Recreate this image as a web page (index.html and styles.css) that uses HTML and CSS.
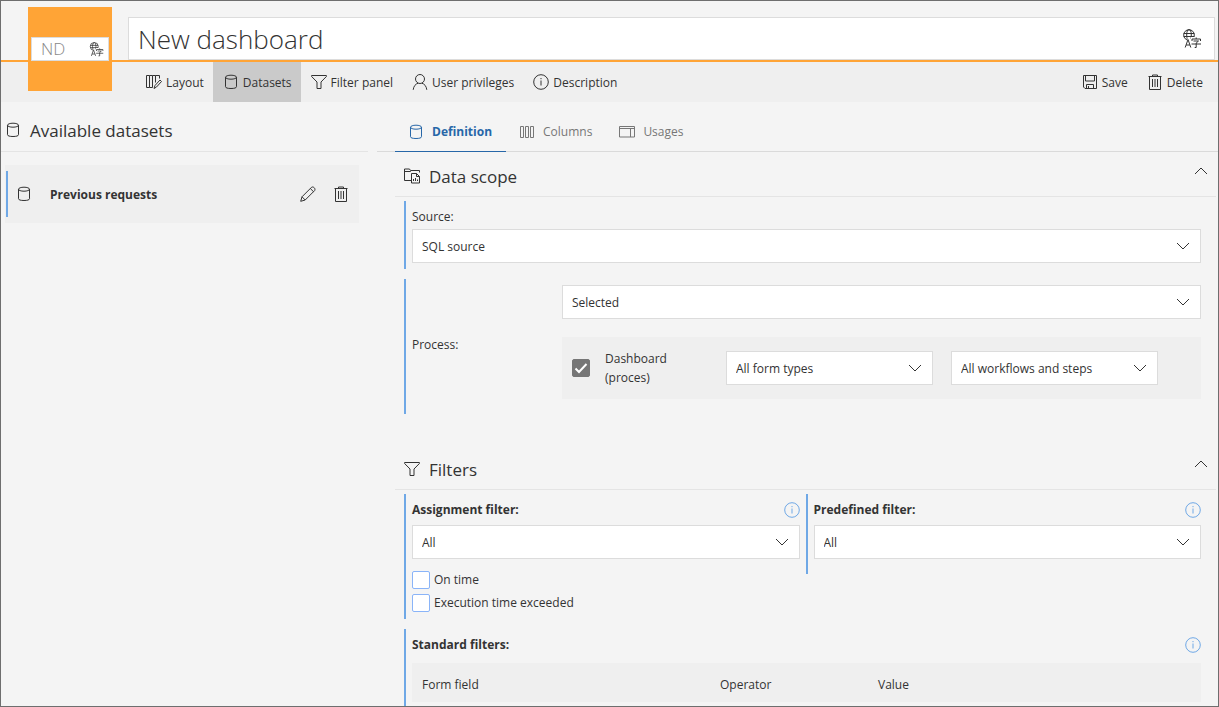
FILE: index.html
```html
<!DOCTYPE html>
<html lang="en">
<head>
<meta charset="utf-8">
<title>New dashboard</title>
<link rel="stylesheet" href="styles.css">
</head>
<body>
<svg class="sprite" aria-hidden="true">
  <symbol id="i-db" viewBox="0 0 16 16"><ellipse cx="8" cy="3.200" rx="5.500" ry="2"/><path d="M2.500 3.200v9.500c0 1.200 2.200 1.800 5.500 1.800s5.500-.6 5.500-1.800v-9.500"/></symbol>
  <symbol id="i-layout" viewBox="0 0 16 16"><path d="M.5 1.500h3v12h-3zM3.500 13.500h3v-12h3v7M6.500 1.500h-3M9.500 1.500h4v3M8 14.500l1-3 5-5.500 1.500 1.500-5 5.500-2.500 1.500z"/></symbol>
  <symbol id="i-filter" viewBox="0 0 16 16"><path d="M.6 1.500h14.800v1l-5.400 5.500v6.500h-4V8L.6 2.500z"/></symbol>
  <symbol id="i-user" viewBox="0 0 16 16"><circle cx="8" cy="5" r="4.500"/><path d="M1.200 15.800c.4-3.600 2.400-6 5-6.600M14.800 15.800c-.4-3.600-2.400-6-5-6.600"/></symbol>
  <symbol id="i-info" viewBox="0 0 16 16"><circle cx="8" cy="8" r="7.300"/><path d="M8 6.500v5M8 4v1.200"/></symbol>
  <symbol id="i-save" viewBox="0 0 16 16"><path d="M1.500 1.500h13v13h-11.500l-1.500-1.500zM3.500 1.500v5.500h9v-5.500M4.500 14.500v-4h7v4M6.500 12v2.500"/></symbol>
  <symbol id="i-trash" viewBox="0 0 16 16"><path d="M1.500 2.500h13M5.500 2.500v-1.500h5v1.500M2.500 2.500v13h11v-13M5.500 5v8M8 5v8M10.500 5v8"/></symbol>
  <symbol id="i-pencil" viewBox="0 0 16 16"><path d="M.7 15.300l1.300-4.500L11.500 1.300c1.800-1.200 4.300 1.200 3.200 3.200L5.200 14zM2 10.800L5.200 14M10.300 2.500l3.200 3.200"/></symbol>
  <symbol id="i-columns" viewBox="0 0 16 16"><path d="M1.500 2.500h3v11h-3zM6.500 2.500h3v11h-3zM11.500 2.500h3v11h-3z"/></symbol>
  <symbol id="i-usages" viewBox="0 0 16 16"><path d="M.5 2.500h15v10.500H.5zM.5 4.500h15M11.500 4.500v8.500"/></symbol>
  <symbol id="i-scope" viewBox="0 0 16 16"><path d="M7 12.500H.5v-11.500h5l1 1.500h9v2M.5 3.500h6l1-1M7.500 5.500h5l3 3v6.500h-8zM12.500 5.500v3h3M9.500 13v-2M11.500 13v-3M13.500 13v-1.500"/></symbol>
  <symbol id="i-down" viewBox="0 0 14 14"><path d="M1 4l6 6 6-6"/></symbol>
  <symbol id="i-up" viewBox="0 0 14 14"><path d="M1 10l6-6 6 6"/></symbol>
  <symbol id="i-lang" viewBox="0 0 20 20"><circle cx="7" cy="6" r="5.300"/><ellipse cx="7" cy="6" rx="2.300" ry="5.300"/><path d="M1.700 4.500h10.600M1.700 7.500h10.600" /><path class="knockout" d="M2 20l3.500-10.500h3.500v-1.500h11v12z"/><path d="M3.200 18.500l2.800-8 2.800 8M4.200 16h3.600M14.200 8.500v1.500M10 12v-2h8.500v2M11.500 12h5l-2.300 2v4.500h-1.500M9.500 15h9.500"/></symbol>
  <symbol id="i-tick" viewBox="0 0 18 18"><path d="M3.500 9.500l3.500 3.500 7.500-8"/></symbol>
</svg>
<div class="app">
  <header class="header">
    <div class="titlebar">
      <div class="title-box">
        <input class="title-input" type="text" value="New dashboard" aria-label="Dashboard name">
        <button class="icon-button" type="button" aria-label="Translate name"><svg class="icon icon-lg"><use href="#i-lang"/></svg></button>
      </div>
    </div>
    <div class="tile">
      <div class="tile-box">
        <input class="tile-input" type="text" value="ND" aria-label="Short name">
        <button class="icon-button" type="button" aria-label="Translate short name"><svg class="icon icon-sm"><use href="#i-lang"/></svg></button>
      </div>
    </div>
    <nav class="toolbar">
      <button class="tool" type="button"><svg class="icon"><use href="#i-layout"/></svg>Layout</button>
      <button class="tool tool-active" type="button"><svg class="icon"><use href="#i-db"/></svg>Datasets</button>
      <button class="tool" type="button"><svg class="icon"><use href="#i-filter"/></svg>Filter panel</button>
      <button class="tool" type="button"><svg class="icon"><use href="#i-user"/></svg>User privileges</button>
      <button class="tool" type="button"><svg class="icon"><use href="#i-info"/></svg>Description</button>
      <span class="spacer"></span>
      <button class="tool" type="button"><svg class="icon"><use href="#i-save"/></svg>Save</button>
      <button class="tool" type="button"><svg class="icon"><use href="#i-trash"/></svg>Delete</button>
    </nav>
  </header>
  <div class="columns">
    <aside class="side">
      <h2 class="side-title"><svg class="icon"><use href="#i-db"/></svg>Available datasets</h2>
      <div class="dataset">
        <div class="dataset-body">
          <svg class="icon"><use href="#i-db"/></svg>
          <span class="dataset-name">Previous requests</span>
          <button class="icon-button" type="button" aria-label="Edit"><svg class="icon"><use href="#i-pencil"/></svg></button>
          <button class="icon-button" type="button" aria-label="Delete dataset"><svg class="icon"><use href="#i-trash"/></svg></button>
        </div>
      </div>
    </aside>
    <main class="main">
      <div class="tabs">
        <button class="tab tab-active" type="button"><svg class="icon"><use href="#i-db"/></svg>Definition</button>
        <button class="tab" type="button"><svg class="icon"><use href="#i-columns"/></svg>Columns</button>
        <button class="tab" type="button"><svg class="icon"><use href="#i-usages"/></svg>Usages</button>
      </div>
      <section class="section">
        <h2 class="section-title"><svg class="icon"><use href="#i-scope"/></svg>Data scope
          <button class="icon-button collapse" type="button" aria-label="Collapse data scope"><svg class="icon chevron"><use href="#i-up"/></svg></button></h2>
        <div class="fields">
          <div class="field">
            <label class="label" for="source">Source:</label>
            <div class="select"><select id="source"><option>SQL source</option></select><svg class="icon chevron"><use href="#i-down"/></svg></div>
          </div>
          <div class="field process">
            <label class="process-label" for="process">Process:</label>
            <div class="process-content">
              <div class="select"><select id="process"><option>Selected</option></select><svg class="icon chevron"><use href="#i-down"/></svg></div>
              <div class="process-row">
                <label class="process-name"><span class="check"><input class="box box-dark" type="checkbox" checked><svg class="tick"><use href="#i-tick"/></svg></span><span>Dashboard<br>(proces)</span></label>
                <div class="select"><select aria-label="Form types"><option>All form types</option></select><svg class="icon chevron"><use href="#i-down"/></svg></div>
                <div class="select"><select aria-label="Workflows"><option>All workflows and steps</option></select><svg class="icon chevron"><use href="#i-down"/></svg></div>
              </div>
            </div>
          </div>
        </div>
      </section>
      <section class="section">
        <h2 class="section-title"><svg class="icon"><use href="#i-filter"/></svg>Filters
          <button class="icon-button collapse" type="button" aria-label="Collapse filters"><svg class="icon chevron"><use href="#i-up"/></svg></button></h2>
        <div class="fields">
          <div class="pair">
            <div class="field">
              <div class="label strong"><label for="assignment">Assignment filter:</label><svg class="icon info"><use href="#i-info"/></svg></div>
              <div class="select"><select id="assignment"><option>All</option></select><svg class="icon chevron"><use href="#i-down"/></svg></div>
              <div class="options">
                <label class="option"><input class="box" type="checkbox">On time</label>
                <label class="option"><input class="box" type="checkbox">Execution time exceeded</label>
              </div>
            </div>
            <div class="field predefined">
              <div class="label strong"><label for="predefined">Predefined filter:</label><svg class="icon info"><use href="#i-info"/></svg></div>
              <div class="select"><select id="predefined"><option>All</option></select><svg class="icon chevron"><use href="#i-down"/></svg></div>
            </div>
          </div>
          <div class="field standard">
            <div class="label strong">Standard filters:<svg class="icon info"><use href="#i-info"/></svg></div>
            <table class="table">
              <thead><tr><th class="col-field">Form field</th><th class="col-operator">Operator</th><th>Value</th></tr></thead>
            </table>
          </div>
        </div>
      </section>
    </main>
  </div>
</div>
</body>
</html>
```
FILE: styles.css
```css
* { box-sizing: border-box; }
body {
  margin: 0;
  color: #333;
  background: #f4f4f4;
  font: 12px/19px "Open Sans", "Noto Sans", sans-serif;
}
button, input, select { font: inherit; color: inherit; }
button { padding: 0; border: 0; background: none; cursor: pointer; }
.sprite { position: absolute; width: 0; height: 0; }
.icon {
  flex: none;
  display: block;
  width: 16px;
  height: 16px;
  fill: none;
  stroke: currentColor;
  stroke-width: 1;
}
.icon-lg { width: 20px; height: 20px; }
.icon-sm { width: 15px; height: 15px; }
.knockout { fill: #fff; stroke: none; }
.chevron { width: 14px; height: 14px; }
.icon-button { flex: none; }
.app {
  display: flex;
  flex-direction: column;
  height: 100vh;
  overflow: hidden;
  border: 1px solid #6e6e6e;
}

/* Header */
.header { display: grid; grid-template-columns: 127px 1fr; flex: none; }
.titlebar {
  grid-area: 1 / 1 / 2 / 3;
  padding: 16px 3px 0 127px;
  border-bottom: 2px solid #ffa436;
}
.title-box, .tile-box {
  display: flex;
  align-items: center;
  background: #fff;
  border: 1px solid #dcdcdc;
}
.title-box { height: 43px; padding: 0 12px 0 9px; }
.title-input, .tile-input {
  flex: 1;
  min-width: 0;
  padding: 0;
  border: 0;
  background: none;
  outline: 0;
  font-weight: 300;
}
.title-input { font-size: 26px; line-height: 36px; }
.tile {
  grid-area: 1 / 1 / 3 / 2;
  align-self: start;
  width: 84px;
  height: 84px;
  margin: 6px 0 0 27px;
  padding: 30px 3px 0;
  background: #ffa436;
  z-index: 1;
}
.tile-box { height: 24px; padding: 0 4px 0 9px; }
.tile-input { font-size: 17px; line-height: 20px; color: #888; }
.toolbar {
  grid-area: 2 / 1 / 3 / 3;
  display: flex;
  height: 40px;
  padding: 0 6px 0 135px;
  background: #efefef;
}
.tool { display: flex; align-items: center; gap: 4px; padding: 0 9px 0 10px; }
.tool-active { background: #cacaca; }
.spacer { flex: 1; }

/* Body columns */
.columns { display: flex; flex: 1; gap: 9px; min-height: 0; }
.side { flex: 0 0 367px; }
.side-title, .section-title {
  display: flex;
  align-items: center;
  margin: 0;
  font-size: 17px;
  line-height: 24px;
  font-weight: 400;
}
.side-title {
  height: 50px;
  padding: 9px 4px 0;
  gap: 9px;
  border-bottom: 1px solid #e4e4e4;
}
.side-title > .icon, .section-title > .icon { margin-bottom: 2px; }
.dataset { margin: 13px 9px 0 4px; padding: 6px 1px; background: #efefef; }
.dataset-body {
  display: flex;
  align-items: center;
  height: 46px;
  padding: 0 9px 0 8px;
  border-left: 2px solid #6fa8e6;
}
.dataset-name { flex: 1; padding-left: 18px; font-weight: 700; }
.dataset-body .icon-button + .icon-button { margin-left: 17px; }

.main { flex: 1; min-width: 0; }
.tabs {
  display: flex;
  height: 50px;
  padding-left: 18px;
  border-bottom: 1px solid #dadada;
}
.tab {
  display: flex;
  align-items: center;
  gap: 8px;
  margin-bottom: -1px;
  padding: 10px 14px 0 13px;
  color: #777;
  border-bottom: 1px solid transparent;
}
.tab-active { color: #2767a8; font-weight: 700; border-color: #2767a8; }

/* Sections */
.section { padding: 0 2px 0 18px; }
.section + .section { margin-top: 31px; }
.section-title {
  height: 45px;
  padding: 5px 8px 0 9px;
  gap: 9px;
  border-bottom: 1px solid #e4e4e4;
}
.collapse { margin: 0 0 12px auto; }
.fields { display: flex; flex-direction: column; gap: 10px; padding: 4px 15px 0 9px; }
.field { padding: 6px 0 6px 6px; border-left: 2px solid #6fa8e6; }
.label { display: flex; justify-content: space-between; align-items: center; margin-bottom: 3px; }
.strong { font-weight: 700; margin-bottom: 6px; }
.info { color: #6fa8e6; }
.select { display: grid; align-items: center; }
.select select {
  grid-area: 1 / 1;
  width: 100%;
  height: 34px;
  padding: 0 34px 0 9px;
  background: #fff;
  border: 1px solid #dcdcdc;
  border-radius: 0;
  appearance: none;
}
.select .icon { grid-area: 1 / 1; justify-self: end; margin-right: 11px; pointer-events: none; }

.process { display: grid; grid-template-columns: 150px 1fr; align-items: center; }
.process-label { padding-bottom: 4px; }
.process-content { display: grid; gap: 18px; padding-bottom: 9px; }
.process-row {
  display: grid;
  grid-template-columns: 136px 1fr 1fr;
  align-items: center;
  gap: 18px;
  padding: 12px 43px 12px 10px;
  background: #efefef;
}
.process-name { display: flex; align-items: center; gap: 15px; }
.box {
  appearance: none;
  flex: none;
  display: block;
  width: 18px;
  height: 18px;
  margin: 0;
  background: #fff;
  border: 1px solid #8ab4f8;
  border-radius: 2px;
}
.box-dark { background: #767676; border-color: #767676; }
.check { display: grid; }
.check > * { grid-area: 1 / 1; }
.tick { width: 18px; height: 18px; fill: none; stroke: #fff; stroke-width: 2; pointer-events: none; }

.pair { display: grid; grid-template-columns: 1fr 1fr; gap: 6px; }
.predefined { align-self: start; padding-bottom: 15px; }
.options { display: grid; gap: 4px; padding: 11px 0 1px; }
.option { display: flex; align-items: center; gap: 4px; }
.table { width: 100%; border-collapse: collapse; table-layout: fixed; background: #efefef; }
.table th { height: 39px; padding: 3px 10px 0; text-align: left; font-weight: 500; }
.col-field { width: 298px; }
.col-operator { width: 158px; }
.standard .strong { margin-bottom: 9px; }
```
